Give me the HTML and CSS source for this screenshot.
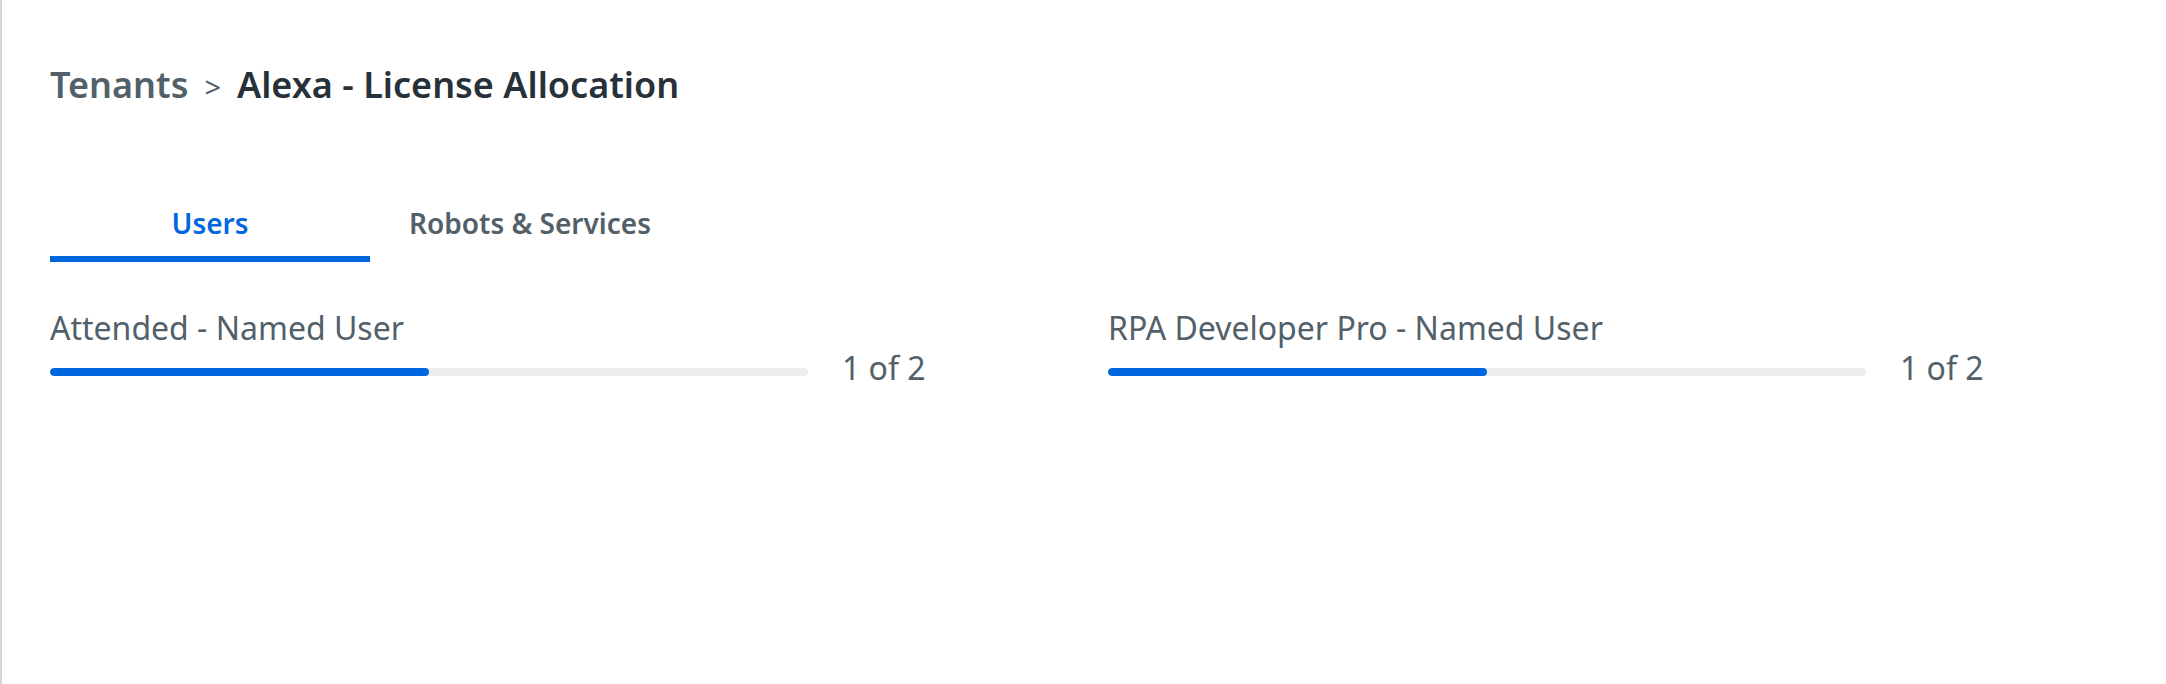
FILE: index.html
```html
<!DOCTYPE html>
<html lang="en">
<head>
<meta charset="utf-8">
<title>Alexa - License Allocation</title>
<link rel="stylesheet" href="styles.css">
</head>
<body>
<div class="page">
  <nav class="breadcrumb">
    <span class="crumb">Tenants</span>
    <span class="sep">&gt;</span>
    <span class="crumb-current">Alexa - License Allocation</span>
  </nav>
  <div class="tabs">
    <div class="tab tab-active">Users</div>
    <div class="tab">Robots &amp; Services</div>
  </div>
  <div class="usage-grid">
    <div class="usage-item">
      <div class="usage-label">Attended - Named User</div>
      <div class="usage-row">
        <div class="bar"><div class="bar-fill" style="width:50%"></div></div>
        <div class="count">1 of 2</div>
      </div>
    </div>
    <div class="usage-item">
      <div class="usage-label">RPA Developer Pro - Named User</div>
      <div class="usage-row">
        <div class="bar"><div class="bar-fill" style="width:50%"></div></div>
        <div class="count">1 of 2</div>
      </div>
    </div>
  </div>
</div>
</body>
</html>
```

FILE: styles.css
```css
html, body {
  margin: 0;
  padding: 0;
  background: #ffffff;
}
body {
  font-family: "Noto Sans", "Open Sans", sans-serif;
  color: #526069;
}
.page {
  box-sizing: border-box;
  min-height: 684px;
  border-left: 2px solid #cfd8dd;
  padding: 65px 0 0 48px;
}
.breadcrumb {
  display: flex;
  align-items: baseline;
  font-size: 36px;
  line-height: 40px;
  font-weight: 600;
}
.crumb {
  color: #526069;
}
.sep {
  font-size: 29px;
  font-weight: 400;
  color: #526069;
  margin: 0 16px 0 16px;
}
.crumb-current {
  color: #273139;
}
.tabs {
  display: flex;
  margin-top: 97px;
}
.tab {
  width: 320px;
  text-align: center;
  font-size: 28px;
  line-height: 36px;
  font-weight: 600;
  color: #526069;
  padding: 1px 0 15px;
  border-bottom: 6px solid transparent;
}
.tab-active {
  color: #0067df;
  border-bottom-color: #0067df;
}
.usage-grid {
  display: grid;
  grid-template-columns: 1058px 1058px;
  margin-top: 46px;
}
.usage-label {
  font-size: 32px;
  line-height: 40px;
  color: #526069;
}
.usage-row {
  display: flex;
  align-items: flex-start;
}
.bar {
  width: 758px;
  height: 8px;
  margin-top: 20px;
  border-radius: 4px;
  background: #ebedef;
  overflow: hidden;
}
.bar-fill {
  height: 100%;
  border-radius: 4px;
  background: #0067df;
}
.count {
  margin-left: 34px;
  font-size: 32px;
  line-height: 40px;
  color: #526069;
}
```
